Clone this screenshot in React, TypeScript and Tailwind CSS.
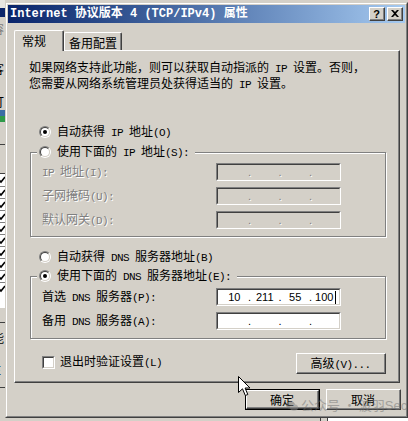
import React, { Fragment } from 'react';

const CJK = /([\u2E80-\u9FFF\u3000-\u303F\uFF00-\uFFEF]+)/;

// mixes CJK text with narrow mono latin, like SimSun does
function T({ s }: { s: string }) {
    return (
        <>
            {s.split(CJK).filter(Boolean).map((p, i) =>
                CJK.test(p)
                    ? <span key={i}>{p}</span>
                    : <span key={i} className="font-['Liberation_Mono',monospace] text-[11px] tracking-[-0.6px] whitespace-pre">{p}</span>
            )}
        </>
    );
}

function Raised({ className, children }: { className: string; children?: React.ReactNode }) {
    return (
        <div className={"border border-t-white border-l-white border-r-[#404040] border-b-[#404040] bg-[#d4d0c8] " + className}>
            <div className="w-full h-full border-r border-b border-[#808080] flex items-center justify-center">
                {children}
            </div>
        </div>
    );
}

function Sunken({ className, bg, children }: { className: string; bg: string; children?: React.ReactNode }) {
    return (
        <div className={"border border-t-[#808080] border-l-[#808080] border-r-white border-b-white shrink-0 " + className}>
            <div className={"w-full h-full border border-t-[#404040] border-l-[#404040] border-r-[#d4d0c8] border-b-[#d4d0c8] " + bg}>
                {children}
            </div>
        </div>
    );
}

function Radio({ on }: { on?: boolean }) {
    return (
        <div className="w-[12px] h-[12px] shrink-0 rounded-full border border-t-[#808080] border-l-[#808080] border-r-white border-b-white">
            <div className="w-full h-full rounded-full border border-t-[#404040] border-l-[#404040] border-r-[#d4d0c8] border-b-[#d4d0c8] bg-white flex items-center justify-center">
                {on && <div className="w-[4px] h-[4px] rounded-full bg-black" />}
            </div>
        </div>
    );
}

function IpField({ vals, disabled }: { vals?: string[]; disabled?: boolean }) {
    return (
        <Sunken className="w-[125px] h-[18px]" bg={disabled ? 'bg-[#d4d0c8]' : 'bg-white'}>
            <div className="flex h-full items-center pl-[3px] font-['Liberation_Sans',sans-serif] text-[11px] leading-[13px]">
                {[0, 1, 2, 3].map(i => (
                    <Fragment key={i}>
                        <span className="w-[27px] flex justify-center items-center">
                            {vals?.[i]}
                            {i === 3 && vals && <span className="ml-[2px] w-px h-[13px] bg-black" />}
                        </span>
                        {i < 3 && (
                            <span className={disabled ? "w-[4px] text-center text-[#808080] [text-shadow:1px_1px_0_#fff]" : "w-[4px] text-center"}>.</span>
                        )}
                    </Fragment>
                ))}
            </div>
        </Sunken>
    );
}

function FieldRow({ label, disabled, vals }: { label: string; disabled?: boolean; vals?: string[] }) {
    return (
        <div className="flex items-center h-[18px] pl-[11px]">
            <div className={disabled ? "w-[174px] text-[#808080] [text-shadow:1px_1px_0_#fff]" : "w-[174px]"}>
                <T s={label} />
            </div>
            <IpField vals={vals} disabled={disabled} />
        </div>
    );
}

function RadioRow({ on, label }: { on?: boolean; label: string }) {
    return (
        <div className="flex items-center gap-[6px] h-[13px]">
            <Radio on={on} />
            <span className="whitespace-nowrap"><T s={label} /></span>
        </div>
    );
}

function Check() {
    return (
        <svg width="5" height="8" viewBox="0 0 5 8" className="mt-[2px]">
            <path d="M-1 4 L1 6 L5 1" stroke="#000" strokeWidth="1.6" fill="none" />
        </svg>
    );
}

// bit of the window that sits behind the dialog
function LeftStrip() {
    return (
        <div className="w-[5px] h-full shrink-0 overflow-hidden flex flex-col bg-[#d4d0c8]">
            <div className="h-[8px] bg-[#e8e6e1]" />
            <div className="h-[9px] bg-[#0a246a]" />
            <div className="h-[5px]" />
            <div className="h-[13px] -ml-[8px] whitespace-nowrap text-[#808080]">容</div>
            <div className="h-[15px] -ml-[10px] whitespace-nowrap text-[#404040] text-[16px] leading-[15px] font-bold">E</div>
            <div className="h-[12px]" />
            <div className="h-[16px] -ml-[8px] whitespace-nowrap text-black">客</div>
            <div className="h-[17px]" />
            <div className="h-[15px] -ml-[8px] whitespace-nowrap text-black">打</div>
            <div className="h-[12px] flex flex-col">
                <div className="h-[6px] bg-[#3a6ea5]" />
                <div className="h-[6px] bg-[#2f9a4a]" />
            </div>
            <div className="h-[22px]" />
            <div className="h-px bg-[#404040]" />
            <div className="h-[18px]" />
            <div className="h-[10px] -ml-[6px] whitespace-nowrap text-[#404040] text-[11px] leading-[10px]">:</div>
            <div className="border-t border-[#404040] bg-white flex flex-col">
                {Array.from({ length: 10 }).map((_, i) => (
                    <div key={i} className="h-[12px] border-t border-[#808080] first:border-t-0">
                        <Check />
                    </div>
                ))}
                <div className="h-[14px]" />
            </div>
            <div className="h-[14px]" />
            <div className="h-px bg-[#404040]" />
            <div className="h-[8px]" />
            <div className="h-[16px] -ml-[8px] whitespace-nowrap text-black">能</div>
            <div className="h-[16px] -ml-[4px] whitespace-nowrap text-black">]</div>
            <div className="h-[14px] -ml-[6px] whitespace-nowrap text-black">É</div>
            <div className="h-[10px]" />
            <div className="h-px bg-[#404040]" />
        </div>
    );
}

export default function App() {
    return (
        <div className="relative w-[408px] h-[421px] overflow-hidden bg-[#d4d0c8] flex font-['Noto_Sans_CJK_SC',sans-serif] text-[12px] leading-[13px] text-black">
            <LeftStrip />

            <div className="flex flex-col">
                <div className="h-[2px]" />

                {/* dialog */}
                <div className="w-[403px] h-[416px] border border-t-[#d4d0c8] border-l-[#d4d0c8] border-r-[#404040] border-b-[#404040]">
                    <div className="h-full border border-t-white border-l-white border-r-[#808080] border-b-[#808080] p-px flex flex-col">

                        {/* title bar */}
                        <div className="h-[18px] flex items-center pl-[2px] pr-[2px] bg-gradient-to-r from-[#0a246a] to-[#a6caf0]">
                            <span className="flex-1 text-white font-bold text-[12px] font-['Liberation_Mono','Noto_Sans_CJK_SC',monospace] whitespace-nowrap">
                                Internet 协议版本 4 (TCP/IPv4) 属性
                            </span>
                            <div className="flex gap-[2px]">
                                <Raised className="w-[16px] h-[14px]">
                                    <span className="font-['Liberation_Sans',sans-serif] font-bold text-[11px] leading-[10px]">?</span>
                                </Raised>
                                <Raised className="w-[16px] h-[14px]">
                                    <svg width="8" height="7" viewBox="0 0 8 7">
                                        <path d="M0 0h2l2 2 2-2h2L5 3.5 8 7H6L4 5 2 7H0l3-3.5z" fill="#000" />
                                    </svg>
                                </Raised>
                            </div>
                        </div>

                        {/* tabs */}
                        <div className="mt-[7px] h-[21px] pl-[6px] flex items-start">
                            <div className="relative z-10 w-[50px] h-[21px] bg-[#d4d0c8] border-t border-l border-r border-t-white border-l-white border-r-[#404040] rounded-t-[2px]">
                                <div className="h-full border-r border-[#808080] pl-[7px] pt-[3px]">常规</div>
                            </div>
                            <div className="mt-[2px] w-[58px] h-[18px] border-t border-l border-r border-t-white border-l-white border-r-[#404040] rounded-t-[2px]">
                                <div className="h-full border-r border-[#808080] pl-[4px] pt-[3px]">备用配置</div>
                            </div>
                        </div>

                        {/* tab panel */}
                        <div className="-mt-px ml-[6px] w-[386px] h-[333px] border border-t-white border-l-white border-r-[#404040] border-b-[#404040]">
                            <div className="h-full border-r border-b border-[#808080] flex flex-col">
                                <div className="mt-[9px] ml-[14px]">
                                    <div><T s="如果网络支持此功能，则可以获取自动指派的 IP 设置。否则，" /></div>
                                    <div><T s="您需要从网络系统管理员处获得适当的 IP 设置。" /></div>
                                </div>

                                <div className="mt-[33px] ml-[24px]">
                                    <RadioRow on label="自动获得 IP 地址(O)" />
                                </div>

                                <div className="mt-[14px] ml-[15px] w-[356px] h-[85px] border border-[#808080] shadow-[inset_1px_1px_0_#fff,1px_1px_0_#fff] flex flex-col">
                                    <div className="-mt-[8px] ml-[6px] self-start bg-[#d4d0c8] pl-[2px] pr-[6px]">
                                        <RadioRow label="使用下面的 IP 地址(S):" />
                                    </div>
                                    <div className="mt-[5px]"><FieldRow disabled label="IP 地址(I):" /></div>
                                    <div className="mt-[6px]"><FieldRow disabled label="子网掩码(U):" /></div>
                                    <div className="mt-[6px]"><FieldRow disabled label="默认网关(D):" /></div>
                                </div>

                                <div className="mt-[13px] ml-[24px]">
                                    <RadioRow label="自动获得 DNS 服务器地址(B)" />
                                </div>

                                <div className="mt-[13px] ml-[15px] w-[356px] h-[63px] border border-[#808080] shadow-[inset_1px_1px_0_#fff,1px_1px_0_#fff] flex flex-col">
                                    <div className="-mt-[8px] ml-[6px] self-start bg-[#d4d0c8] pl-[2px] pr-[6px]">
                                        <RadioRow on label="使用下面的 DNS 服务器地址(E):" />
                                    </div>
                                    <div className="mt-[6px]"><FieldRow label="首选 DNS 服务器(P):" vals={['10', '211', '55', '100']} /></div>
                                    <div className="mt-[6px]"><FieldRow label="备用 DNS 服务器(A):" /></div>
                                </div>

                                <div className="mt-[14px] pl-[27px] pr-[12px] flex items-start justify-between">
                                    <div className="mt-[1px] flex items-center gap-[5px]">
                                        <Sunken className="w-[13px] h-[13px]" bg="bg-white" />
                                        <span><T s="退出时验证设置(L)" /></span>
                                    </div>
                                    <Raised className="w-[90px] h-[21px]">
                                        <span className="pt-px"><T s="高级(V)..." /></span>
                                    </Raised>
                                </div>
                            </div>
                        </div>

                        {/* OK / Cancel */}
                        <div className="mt-[6px] pr-[4px] flex justify-end gap-[6px]">
                            <div className="w-[75px] h-[21px] border border-black">
                                <Raised className="w-full h-full">确定</Raised>
                            </div>
                            <Raised className="w-[75px] h-[21px]">取消</Raised>
                        </div>
                    </div>
                </div>

                <div className="h-[3px] flex">
                    <div className="w-[315px]" />
                    <div className="w-px bg-[#404040]" />
                    <div className="w-[6px]" />
                    <div className="w-px bg-[#404040]" />
                    <div className="flex-1 bg-white" />
                </div>
            </div>

            {/* watermark */}
            <div className="absolute left-[286px] top-[398px] flex items-center gap-[3px] opacity-50 text-[#707070] text-[13px] leading-[14px] pointer-events-none">
                <svg width="12" height="10" viewBox="0 0 12 10">
                    <ellipse cx="4.5" cy="4" rx="4.5" ry="3.8" fill="#707070" />
                    <ellipse cx="8" cy="6.5" rx="4" ry="3.3" fill="#8a8a8a" />
                </svg>
                <span className="whitespace-nowrap">公众号 · 波羽<span className="font-['Liberation_Sans',sans-serif]">Sec</span></span>
            </div>

            {/* mouse pointer */}
            <svg className="absolute left-[238px] top-[376px]" width="13" height="21" viewBox="0 0 13 21">
                <path d="M0.5 0.5 L0.5 16.5 L4.5 12.8 L7.3 19.5 L9.8 18.5 L7.1 12 L12 12 Z" fill="#fff" stroke="#000" strokeWidth="1" />
            </svg>
        </div>
    );
}
